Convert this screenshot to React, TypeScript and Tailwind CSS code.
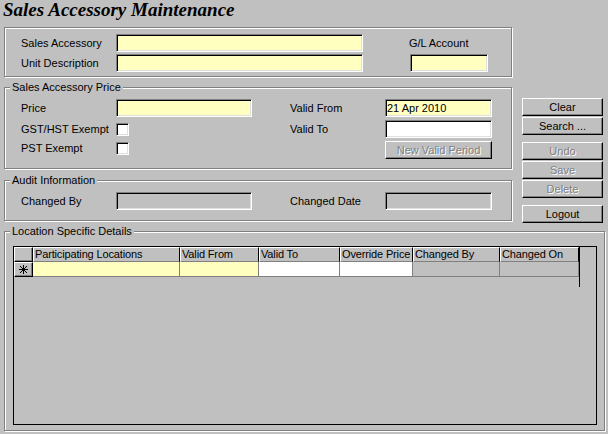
import React from 'react';

const sunken =
  'border border-t-[#808080] border-l-[#808080] border-b-white border-r-white shadow-[inset_1px_1px_0_#000,inset_-1px_-1px_0_#dfdfdf]';
const raised =
  'border border-t-white border-l-white border-b-black border-r-black shadow-[inset_-1px_-1px_0_#808080]';
const etched = 'border border-[#808080] shadow-[1px_1px_0_#fff,inset_1px_1px_0_#fff]';

const Group: React.FC<{ legend?: string; className: string; children?: React.ReactNode }> = ({
  legend,
  className,
  children,
}) => (
  <div className={`relative ${etched} ${className}`}>
    {legend && (
      <span className="absolute -top-[7px] left-[5px] px-[2px] bg-[#c0c0c0] whitespace-nowrap">{legend}</span>
    )}
    {children}
  </div>
);

const Field: React.FC<{ className: string; children?: React.ReactNode }> = ({ className, children }) => (
  <div className={`h-[18px] pl-[1px] flex items-center ${sunken} ${className}`}>{children}</div>
);

const Row: React.FC<{ label: string; children: React.ReactNode; className?: string }> = ({
  label,
  children,
  className = 'h-[18px]',
}) => (
  <div className={`flex items-center ${className}`}>
    <span className="w-[95px] whitespace-nowrap">{label}</span>
    {children}
  </div>
);

const Check = () => <div className={`w-[13px] h-[13px] bg-white ${sunken}`} />;

const Button: React.FC<{ label: string; disabled?: boolean; className?: string }> = ({
  label,
  disabled,
  className = '',
}) => (
  <div
    className={`h-[18px] flex items-center justify-center ${raised} ${className} ${
      disabled ? 'text-[#808080] [text-shadow:1px_1px_0_#fff]' : 'text-black'
    }`}
  >
    {label}
  </div>
);

const COLS = [
  { name: 'Participating Locations', w: 'w-[147px]', bg: 'bg-[#ffffc0]' },
  { name: 'Valid From', w: 'w-[79px]', bg: 'bg-[#ffffc0]' },
  { name: 'Valid To', w: 'w-[81px]', bg: 'bg-white' },
  { name: 'Override Price', w: 'w-[73px]', bg: 'bg-white' },
  { name: 'Changed By', w: 'w-[87px]', bg: 'bg-[#c0c0c0]' },
  { name: 'Changed On', w: 'w-[79px]', bg: 'bg-[#c0c0c0]' },
];

const NewRowMark = () => (
  <svg width="9" height="9" viewBox="0 0 9 9" stroke="#000" strokeWidth="1.2" shapeRendering="crispEdges">
    <line x1="4.5" y1="0" x2="4.5" y2="9" />
    <line x1="0" y1="4.5" x2="9" y2="4.5" />
    <line x1="1.3" y1="1.3" x2="7.7" y2="7.7" />
    <line x1="7.7" y1="1.3" x2="1.3" y2="7.7" />
  </svg>
);

export default function App() {
  return (
    <div className="w-[608px] h-[434px] overflow-hidden bg-[#c0c0c0] text-black text-[11px] leading-[13px] [font-family:Liberation_Sans,Arial,sans-serif]">
      <div className="h-[27px] pl-[3px] [font-family:Liberation_Serif,Times_New_Roman,serif] text-[19px] leading-[20px] font-bold italic">
        Sales Accessory Maintenance
      </div>

      <div className="flex items-start pl-[4px]">
        <div className="flex flex-col w-[508px]">
          <Group className="h-[50px] pt-[6px] pl-[16px] flex">
            <div className="flex flex-col gap-[2px]">
              <Row label="Sales Accessory">
                <Field className="w-[247px] bg-[#ffffc0]" />
              </Row>
              <Row label="Unit Description">
                <Field className="w-[247px] bg-[#ffffc0]" />
              </Row>
            </div>
            <div className="ml-[46px] flex flex-col gap-[2px]">
              <div className="h-[18px] flex items-center">G/L Account</div>
              <Field className="ml-[1px] w-[78px] bg-[#ffffc0]" />
            </div>
          </Group>

          <Group legend="Sales Accessory Price" className="mt-[10px] h-[82px] pt-[11px] pl-[16px] flex">
            <div className="flex flex-col">
              <Row label="Price">
                <Field className="w-[136px] bg-[#ffffc0]" />
              </Row>
              <Row label="GST/HST Exempt" className="h-[13px] mt-[6px]">
                <Check />
              </Row>
              <Row label="PST Exempt" className="h-[13px] mt-[6px]">
                <Check />
              </Row>
            </div>
            <div className="ml-[38px] flex flex-col gap-[3px]">
              <Row label="Valid  From">
                <Field className="w-[107px] bg-[#ffffc0]">21 Apr 2010</Field>
              </Row>
              <Row label="Valid To">
                <Field className="w-[107px] bg-white" />
              </Row>
              <div className="flex">
                <div className="w-[95px]" />
                <Button label="New Valid Period" disabled className="w-[107px]" />
              </div>
            </div>
          </Group>

          <Group legend="Audit Information" className="mt-[11px] h-[41px] pt-[11px] pl-[16px] flex">
            <Row label="Changed By">
              <Field className="w-[136px] bg-[#c0c0c0]" />
            </Row>
            <div className="ml-[38px]">
              <Row label="Changed Date">
                <Field className="w-[107px] bg-[#c0c0c0]" />
              </Row>
            </div>
          </Group>
        </div>

        <div className="ml-[10px] mt-[71px] w-[81px] flex flex-col">
          <Button label="Clear" />
          <Button label="Search ..." className="mt-[1px]" />
          <Button label="Undo" disabled className="mt-[7px]" />
          <Button label="Save" disabled className="mt-[1px]" />
          <Button label="Delete" disabled className="mt-[1px]" />
          <Button label="Logout" className="mt-[7px]" />
        </div>
      </div>

      <div className="pl-[4px] mt-[8px]">
        <Group legend="Location Specific Details" className="w-[601px] h-[200px] pt-[14px] pl-[8px]">
          <div className="w-[584px] h-[179px] border border-black flex items-start">
            <div className="w-[565px] flex flex-col">
              <div className="flex h-[15px]">
                <div className={`w-[19px] h-full ${raised}`} />
                {COLS.map((c) => (
                  <div
                    key={c.name}
                    className={`${c.w} h-full pl-[1px] tracking-[-0.15px] whitespace-nowrap overflow-hidden border border-t-white border-l-white border-b-[#808080] border-r-black`}
                  >
                    {c.name}
                  </div>
                ))}
              </div>
              <div className="flex h-[15px]">
                <div className={`w-[19px] h-full flex items-center justify-center ${raised}`}>
                  <NewRowMark />
                </div>
                {COLS.map((c) => (
                  <div key={c.name} className={`${c.w} h-full ${c.bg} border-r border-b border-[#808080]`} />
                ))}
              </div>
            </div>
            <div className="w-[1px] h-[40px] bg-black" />
          </div>
        </Group>
      </div>
    </div>
  );
}
